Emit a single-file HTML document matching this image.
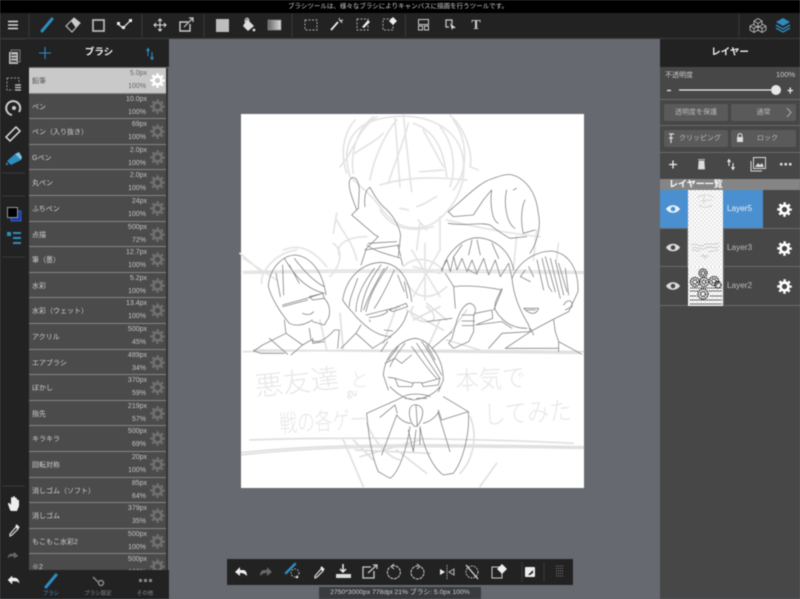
<!DOCTYPE html>
<html lang="ja">
<head>
<meta charset="utf-8">
<title>MediBang Paint</title>
<style>
html,body{margin:0;padding:0;background:#666a70}
#app{position:relative;width:800px;height:599px;overflow:hidden;background:#666a70;font-family:"Liberation Sans","Noto Sans CJK JP",sans-serif;color:#ddd;filter:blur(.4px)}
.a{position:absolute}
#top{left:-2px;top:0;width:800px;height:13px;background:#000;color:#ccc;font-size:6.500px;line-height:13px;text-align:center}
#topfill{left:0;top:0;width:800px;height:13px;background:#000}
#bar{left:0;top:13px;width:800px;height:25px;background:#222}
#line{left:0;top:38px;width:800px;height:1px;background:#3c3c3c}
#side{left:0;top:39px;width:29px;height:560px;background:#222}
#brushhead{left:29px;top:39px;width:140px;height:28px;background:#222;color:#eee;font-size:9.500px;font-weight:bold;line-height:28px;text-align:center}
#list{left:29px;top:68px;width:139px;height:502px;overflow:hidden;background:#4a4a4a}
.r{position:relative;height:25.600px;box-sizing:border-box;border-bottom:1px solid #858585;background:#4b4b4b;font-size:7px;color:#cfcfcf}
.r b{position:absolute;left:3px;top:8px;font-weight:normal}
.r i{position:absolute;right:21px;top:2px;font-style:normal;font-size:7px;color:#c4c4c4}
.r u{position:absolute;right:22px;top:15px;text-decoration:none;font-size:7px;color:#c4c4c4}
.r svg{position:absolute;left:121px;top:5px;width:15px;height:15px;fill:#6f6f6f;stroke:#6f6f6f}
.r.on{background:#c9c9c9;color:#555}
.r.on i,.r.on u{color:#666}
.r.on svg{fill:#fff;stroke:#fff}
#scroll{left:166px;top:68px;width:2px;height:502px;background:#333}
#tabs{left:29px;top:570px;width:140px;height:29px;background:#222}
.t{position:absolute;top:20px;font-size:5.500px;line-height:8px;color:#8a8a8a;width:50px;text-align:center}
#right{left:660px;top:39px;width:140px;height:560px;background:#474747}
#rhead{left:660px;top:39px;width:140px;height:28px;background:#222;color:#eee;font-size:9.500px;font-weight:bold;line-height:28px;text-align:center}
.sep{position:absolute;left:660px;width:140px;height:1px;background:#6a6a6a}
.btn{position:absolute;height:17px;background:#5a5a5a;border-radius:2px;font-size:7px;line-height:17px;text-align:center;color:#bbb}
#lab{left:660px;top:179px;width:140px;height:11px;background:#858585;color:#fff;font-size:9px;font-weight:bold;line-height:11px;text-indent:9px;overflow:hidden}
.row{position:absolute;left:660px;width:140px;height:38.500px;box-sizing:border-box;border-bottom:1px solid #6a6a6a;font-size:8.200px;color:#bbb}
.row span{position:absolute;left:67px;top:14px}
.th{position:absolute;left:688px;width:35px;height:38.500px;background:#fff;background-image:conic-gradient(#e6e6e6 25%,#fff 0 50%,#e6e6e6 0 75%,#fff 0);background-size:4px 4px}
#barb{left:227px;top:559px;width:346px;height:26px;background:#222}
#status{left:319px;top:587px;width:162px;height:12px;background:#3a3b3d;color:#ccc;font-size:6.800px;line-height:12px;text-align:center}
#canvas{left:241px;top:114px;width:343px;height:374px;background:#fff}
svg.o{position:absolute;left:0;top:0;width:800px;height:599px;pointer-events:none}
</style>
</head>
<body>
<div id="app">
<svg width="0" height="0" style="position:absolute"><defs>
<symbol id="gear" viewBox="0 0 24 24"><circle cx="12" cy="12" r="6.400" fill="none" stroke-width="4.400"/><circle cx="12" cy="12" r="9.900" fill="none" stroke-width="3.600" stroke-dasharray="3.900 3.880" stroke-dashoffset="2"/></symbol>
</defs></svg>

<div class="a" id="topfill"></div>
<div class="a" id="top">ブラシツールは、様々なブラシによりキャンバスに描画を行うツールです。</div>
<div class="a" id="bar"></div>
<div class="a" id="line"></div>
<div class="a" id="side"></div>
<div class="a" id="brushhead">ブラシ</div>

<div class="a" id="list">
<div class="r on"><b>鉛筆</b><i>5.0px</i><u>100%</u><svg><use href="#gear"/></svg></div>
<div class="r"><b>ペン</b><i>10.0px</i><u>100%</u><svg><use href="#gear"/></svg></div>
<div class="r"><b>ペン（入り抜き）</b><i>69px</i><u>100%</u><svg><use href="#gear"/></svg></div>
<div class="r"><b>Gペン</b><i>2.0px</i><u>100%</u><svg><use href="#gear"/></svg></div>
<div class="r"><b>丸ペン</b><i>2.0px</i><u>100%</u><svg><use href="#gear"/></svg></div>
<div class="r"><b>ふちペン</b><i>24px</i><u>100%</u><svg><use href="#gear"/></svg></div>
<div class="r"><b>点描</b><i>500px</i><u>72%</u><svg><use href="#gear"/></svg></div>
<div class="r"><b>筆（墨）</b><i>12.7px</i><u>100%</u><svg><use href="#gear"/></svg></div>
<div class="r"><b>水彩</b><i>5.2px</i><u>100%</u><svg><use href="#gear"/></svg></div>
<div class="r"><b>水彩（ウェット）</b><i>13.4px</i><u>100%</u><svg><use href="#gear"/></svg></div>
<div class="r"><b>アクリル</b><i>500px</i><u>45%</u><svg><use href="#gear"/></svg></div>
<div class="r"><b>エアブラシ</b><i>489px</i><u>34%</u><svg><use href="#gear"/></svg></div>
<div class="r"><b>ぼかし</b><i>370px</i><u>59%</u><svg><use href="#gear"/></svg></div>
<div class="r"><b>指先</b><i>219px</i><u>57%</u><svg><use href="#gear"/></svg></div>
<div class="r"><b>キラキラ</b><i>500px</i><u>69%</u><svg><use href="#gear"/></svg></div>
<div class="r"><b>回転対称</b><i>20px</i><u>100%</u><svg><use href="#gear"/></svg></div>
<div class="r"><b>消しゴム（ソフト）</b><i>85px</i><u>64%</u><svg><use href="#gear"/></svg></div>
<div class="r"><b>消しゴム</b><i>379px</i><u>35%</u><svg><use href="#gear"/></svg></div>
<div class="r"><b>もこもこ水彩2</b><i>500px</i><u>100%</u><svg><use href="#gear"/></svg></div>
<div class="r"><b>※2</b><i>500px</i><u>100%</u><svg><use href="#gear"/></svg></div>
</div>
<div class="a" id="scroll"></div>

<div class="a" id="tabs">
<div class="t" style="left:-3px;color:#3d8fc4">ブラシ</div>
<div class="t" style="left:44px">ブラシ設定</div>
<div class="t" style="left:91px">その他</div>
</div>

<div class="a" id="right"></div>
<div class="a" id="rhead">レイヤー</div>
<div class="a" style="left:665px;top:70px;font-size:7px;color:#ccc">不透明度</div>
<div class="a" style="left:776px;top:70px;font-size:7.500px;color:#ccc">100%</div>
<div class="sep" style="top:99px"></div>
<div class="btn" style="left:664px;top:104px;width:64px">透明度を保護</div>
<div class="btn" style="left:731px;top:104px;width:65px">通常</div>
<div class="sep" style="top:125px"></div>
<div class="btn" style="left:664px;top:130px;width:64px;text-indent:8px">クリッピング</div>
<div class="btn" style="left:731px;top:130px;width:65px;text-indent:8px">ロック</div>
<div class="sep" style="top:152px"></div>
<div class="a" id="lab">レイヤー一覧</div>

<div class="row" style="top:190px;background:linear-gradient(90deg,#4a90d0 103px,#474747 103px);color:#e8f0f8"><span>Layer5</span></div>
<div class="row" style="top:228.500px"><span>Layer3</span></div>
<div class="row" style="top:267px"><span>Layer2</span></div>
<div class="th" style="top:190px"></div>
<div class="th" style="top:228.500px"></div>
<div class="th" style="top:267px"></div>

<div class="a" id="canvas"></div>

<div class="a" id="barb"></div>
<div class="a" id="status">2750*3000px 778dpi 21% ブラシ: 5.0px 100%</div>

<svg class="o" viewBox="0 0 800 599">
<!-- toolbar separators -->
<g stroke="#3a3a3a" stroke-width="1">
<path d="M29 14V37M142 14V37M204 14V37M292 14V37M405.500 14V37M739 14V37"/>
<path d="M2 39H25M2 173H25M2 196H25M2 257H25M2 486H25M522 562V582M544 562V582"/>
</g>

<!-- SKETCH light: upper -->
<g transform="translate(240 110) scale(.3333)" fill="none" stroke="#e4e4e4" stroke-width="5" stroke-linecap="round">
<path d="M330 200C300 100 340 30 460 20C570 10 660 60 670 150C680 230 640 300 580 340C520 370 460 350 420 290C390 250 360 230 330 200"/>
<path d="M345 30C310 70 300 130 320 190M400 20C350 60 330 130 340 190M490 15L515 245M470 30C430 80 400 150 390 210M520 40C580 60 610 110 620 200M300 170C340 130 350 60 410 20M640 30C690 100 680 190 640 240M630 15C680 60 700 140 690 170L715 180M420 225C500 200 580 200 680 210M465 25L480 230M550 60L610 170M540 185L610 180M505 40C490 100 460 170 445 220M600 50C640 100 650 170 630 230M345 130C370 110 400 100 430 70"/>
<path d="M530 290C560 280 570 270 590 260M480 295L505 300M540 340L530 420M600 320L600 420M535 330L560 360M420 300C450 350 500 370 580 350"/>
<path d="M300 440C280 400 330 380 380 380M290 310L280 370M620 330C700 350 800 370 900 380M280 400C320 430 290 480 270 500M10 485C300 478 700 478 1030 485M12 490C300 484 700 486 1030 490M10 445L110 510M0 430L70 490M130 420C180 400 220 420 260 470M65 520C60 490 100 430 170 420M290 330C310 370 340 400 350 450"/>
<path d="M515 420L600 560M600 420L520 560M830 380L820 480M890 360L880 450M955 400L950 450M490 470C520 440 570 440 610 480M500 520C530 570 580 570 620 530M555 400V570M520 470L600 490"/>
</g>

<!-- SKETCH light: lower -->
<g transform="translate(240 300) scale(.3333)" fill="none" stroke="#e0e0e0" stroke-width="5" stroke-linecap="round">
<path d="M10 155C300 150 700 150 1030 155M40 150L1020 160"/>
<path d="M5 465C300 430 700 440 1030 445M5 458C300 425 700 435 1030 440M30 420C300 410 700 415 1000 430"/>
<path d="M310 420L370 560M770 490L720 560M345 450L570 460M340 420L400 480M470 450L560 520M380 370C400 420 440 470 480 480M360 470L540 420M690 350C720 420 690 490 660 520"/>
<path d="M240 60L260 150M300 40L310 150M520 20C480 70 640 90 560 20M600 60L560 150M470 20L430 130M500 30L610 90M520 60L600 20M560 10L620 60M680 30L630 100M620 120L720 150"/>
</g>
<g font-family="'Noto Sans CJK JP',sans-serif" fill="#e7e7e7" font-weight="300">
<text x="256" y="396" font-size="27" textLength="84" lengthAdjust="spacingAndGlyphs" transform="rotate(-6 256 396)">悪友達</text>
<text x="350" y="386" font-size="19">と</text>
<text x="456" y="390" font-size="26" textLength="70" lengthAdjust="spacingAndGlyphs" transform="rotate(-3 456 390)">本気で</text>
<text x="280" y="432" font-size="24" textLength="88" lengthAdjust="spacingAndGlyphs" transform="rotate(-3 280 432)">戦の各ゲー</text>
<text x="484" y="424" font-size="26" textLength="88" lengthAdjust="spacingAndGlyphs" transform="rotate(-3 484 424)">してみた</text>
<text x="347" y="396" font-size="9" fill="#ccc">gu</text>
</g>

<!-- SKETCH dark: hands at top -->
<g transform="translate(240 110) scale(.3333)" fill="none" stroke="#858585" stroke-width="2.400" stroke-linecap="round" stroke-linejoin="round">
<path d="M350 300C340 270 325 240 328 215C335 190 358 205 358 240L355 295"/>
<path d="M375 290C372 265 375 240 390 232C400 250 410 270 430 290C455 310 475 340 482 375L475 440"/>
<path d="M355 295L335 315L405 375L415 380L375 420L480 405"/>
<path d="M385 400L470 395"/>
<path d="M625 305C680 260 720 215 760 205C790 195 810 185 840 205C870 225 890 260 895 310C905 350 890 400 870 430"/>
<path d="M625 340C680 350 720 335 750 345C770 360 790 375 810 385L860 380"/>
<path d="M625 305L640 320L700 315L730 270L755 240M755 240C750 280 755 330 775 340M800 240C790 280 800 340 825 355M855 270C840 300 845 350 850 370L885 360M820 240L830 235"/>
</g>

<!-- SKETCH dark: left two heads -->
<g transform="translate(241 245) scale(.3333)" fill="none" stroke="#858585" stroke-width="2.400" stroke-linecap="round" stroke-linejoin="round">
<path d="M82 125C85 70 125 30 165 30C205 35 245 75 255 150"/>
<path d="M82 125C95 170 120 205 145 235C165 245 190 240 215 225"/>
<path d="M130 40C160 90 190 130 250 145M125 60L128 150M105 85L118 155M160 40C190 80 220 110 250 125M145 60L175 115"/>
<path d="M125 180C160 170 200 160 245 145M205 155L245 145L250 160L215 165ZM125 185L200 165"/>
<path d="M185 205C200 212 212 208 218 200"/>
<path d="M130 225L135 265L65 300L38 318L60 325L130 325M135 265L185 300L150 330M85 280L140 328M205 250L210 285L185 300"/>
<path d="M250 160C265 175 270 200 262 220L250 240L215 230M210 285C225 295 250 290 280 255L295 255L290 310M215 280L215 295L250 290"/>
<path d="M305 165C315 100 360 55 420 52C470 55 505 95 512 170"/>
<path d="M305 165C320 190 340 205 345 215M420 60C390 100 365 150 360 200M440 65C410 110 385 150 375 200M400 70C370 110 345 150 345 200M460 75C440 120 420 160 400 190M350 100C340 130 325 160 325 185M470 90L490 140M490 110L500 160M430 70C400 120 380 160 368 195"/>
<path d="M375 210L435 195L475 185M385 218C410 215 430 210 440 200L435 195M445 195L495 175L500 185L455 200Z"/>
<path d="M345 215C370 240 400 270 445 275C470 260 490 235 500 200"/>
<path d="M430 255L455 258M385 225L388 230"/>
<path d="M360 240L345 265L300 310M345 265L395 310L450 275M440 290L420 320"/>
<path d="M375 15L360 60M378 0C400 20 450 30 480 40L485 60M470 0L480 35"/>
</g>

<!-- SKETCH dark: right two heads -->
<g transform="translate(412 235) scale(.3333)" fill="none" stroke="#858585" stroke-width="2.400" stroke-linecap="round" stroke-linejoin="round">
<path d="M90 110C100 55 150 10 195 8C250 10 295 50 305 105"/>
<path d="M88 105L105 75L115 110L125 65L135 105L150 70L165 110L180 75L195 115L215 70L230 120L250 75L265 125L290 85L300 130"/>
<path d="M180 15L170 60M195 15L205 60M150 30L125 65M240 25L260 70M170 105L195 118"/>
<path d="M100 115L125 155L130 220M125 155C170 150 220 155 270 165L245 225"/>
<path d="M120 310L135 255C145 225 160 205 175 205C190 210 195 225 185 240L185 290L170 320L125 340L110 325ZM150 240H188M150 258H188M150 272H185"/>
<path d="M190 235L240 225L242 250L195 268"/>
<path d="M45 260L120 250M120 290L60 340M190 270L270 260L300 280M230 340L270 295L355 290M280 340L355 290"/>
<path d="M300 130C320 80 370 48 420 48C470 55 500 100 498 170L470 230L420 255"/>
<path d="M300 130C305 180 320 220 350 270L355 290L420 255"/>
<path d="M375 75L395 165M390 70L410 155L420 170M350 95L365 125M400 65L430 170M415 70L445 190M440 85L465 170M460 100L470 180M340 105L325 125L355 140M430 75L455 180"/>
<path d="M455 210C465 190 485 195 480 215L460 225"/>
<path d="M335 220C350 235 370 245 380 220ZM345 225L370 225"/>
<path d="M355 280L365 300M425 255L430 290L440 320L510 358M440 320L440 350M280 340L440 340"/>
<path d="M250 225C270 260 300 280 345 280M270 160C255 190 245 205 250 225"/>
</g>

<!-- SKETCH dark: center figure -->
<g transform="translate(340 330) scale(.3333)" fill="none" stroke="#858585" stroke-width="2.400" stroke-linecap="round" stroke-linejoin="round">
<path d="M130 135C135 75 180 30 225 25C270 30 310 85 310 150"/>
<path d="M135 100L165 85L185 100L215 75M215 50C235 75 260 115 290 145M230 40C250 70 275 110 300 145M245 35C265 60 290 110 305 135M260 45L285 90M195 40C180 60 160 85 150 110M175 50L145 90M130 135L145 180M310 150L295 185"/>
<path d="M165 145L220 160L215 170L175 170ZM245 160L300 145L295 165L250 170ZM220 158H245M145 142L165 145"/>
<path d="M150 170C170 190 190 205 220 210C260 205 285 190 300 170"/>
<path d="M190 200C205 190 250 190 270 200M195 205L215 207M230 205L260 205"/>
<path d="M210 235C215 220 240 220 248 240C250 265 235 290 225 290C210 280 205 250 210 235M228 225L232 290M170 255C180 270 200 280 212 280M250 280C270 275 290 260 295 245"/>
<path d="M80 250L170 210L190 200M120 262L165 225L172 250M310 200L385 245L305 270L295 240"/>
<path d="M80 250C85 310 95 380 115 425L150 445C175 430 200 360 210 290M385 245C390 310 370 390 340 430L310 435C275 410 250 350 240 290M170 255L125 375M295 250L330 365M205 300L220 365L228 300M240 290V345"/>
</g>

<!-- top toolbar icons -->
<g fill="none" stroke="#ddd">
<path d="M8 21.500H18M8 25H18M8 28.500H18" stroke-width="1.500"/>
<path d="M42 31L52 19" stroke="#2e8cc0" stroke-width="3" stroke-linecap="round"/>
<path d="M66 26L74 18L80 23L72 32Z" stroke="#bbb" stroke-width="1.200"/><path d="M71 21L74 18L80 23L76 28Z" fill="#ccc" stroke="none"/>
<rect x="93" y="20" width="11" height="11" stroke="#bbb" stroke-width="1.700"/>
<path d="M118 24L123 28L131 20" stroke="#ddd" stroke-width="1.300"/><path d="M117 22h3v3h-3zM122 26h3v3h-3zM129 19h3v3h-3z" fill="#eee" stroke="none"/>
<path d="M160 19V31M154 25H166M158 21L160 19L162 21M158 29L160 31L162 29M156 23L154 25L156 27M164 23L166 25L164 27" stroke="#ddd" stroke-width="1"/>
<path d="M188 22H180V31H190V24" stroke="#ccc" stroke-width="1.400"/><path d="M184 27L193 18M189 18H193V22" stroke="#ccc" stroke-width="1.200"/>
<rect x="216" y="19" width="13" height="13" fill="#bdbdbd" stroke="none"/>
<path d="M247 19L254 26L248 31L243 26Z" fill="#ddd" stroke="none"/><path d="M245 22C245 17 249 17 249 21" stroke="#ddd"/><circle cx="254" cy="30" r="1.400" fill="#ddd" stroke="none"/>
<rect x="268" y="20" width="13" height="10" fill="url(#gr)" stroke="#888" stroke-width=".7"/>
<g stroke="#aaa" stroke-dasharray="2 1.500" stroke-width="1"><rect x="305" y="20" width="12" height="10"/><rect x="357" y="19" width="11" height="11"/><rect x="383" y="19" width="10" height="11"/></g>
<path d="M331 30L338 22" stroke="#eee" stroke-width="1.800"/><path d="M339 18L340 21L343 20M342 23L341 21" stroke="#ddd"/>
<path d="M362 27L368 20L370 22L364 28Z" fill="#eee" stroke="none"/>
<path d="M389 21L393 17L397 21L393 25Z" fill="#eee" stroke="none"/>
<rect x="418.500" y="19.500" width="10" height="5" stroke="#ccc"/><rect x="418.500" y="26" width="4" height="4" stroke="#ccc"/><rect x="424.500" y="26" width="4" height="4" stroke="#ccc"/>
<path d="M452 24V20H446V27H449" stroke="#ccc" stroke-width="1.200"/><path d="M450 23L456 28L453 28L452 30Z" fill="#ddd" stroke="none"/>
<g stroke="#bbb" stroke-width=".9"><path d="M754 21L758 18.500L762 21L758 23.500ZM754 21V25L758 27.500L762 25V21M758 23.500V27.500"/><path d="M750 26L754 24M750 26L754 28.500L758 26M750 26V30L754 32.500L758 30V26M754 28.500V32.500M766 26L762 24M766 26L762 28.500L758 26M766 26V30L762 32.500L758 30M762 28.500V32.500"/></g>
<path d="M783 18L790 22L783 26L776 22Z" fill="#2e8cc0" stroke="none"/><path d="M776 25L783 29L790 25M776 28L783 32L790 28" stroke="#2e8cc0" stroke-width="1.300"/>
</g>
<defs><linearGradient id="gr"><stop offset="0" stop-color="#666"/><stop offset="1" stop-color="#ddd"/></linearGradient></defs>
<text x="476" y="29" text-anchor="middle" font-family="'Liberation Serif',serif" font-size="14" font-weight="bold" fill="#ccc">T</text>

<!-- brush header icons -->
<g fill="none">
<path d="M45 47V59M39 53H51" stroke="#2e8cc0" stroke-width="1.100"/>
<path d="M148 49V56M146.500 51L148 48.500L149.500 51M152 52V59M150.500 57L152 59.500L153.500 57" stroke="#2e8cc0" stroke-width="1.100"/>
</g>

<!-- left sidebar icons -->
<g fill="none" stroke="#bbb">
<rect x="9" y="52" width="9" height="12" fill="#bbb" stroke="none"/><rect x="11" y="50" width="9" height="12" stroke="#777"/><path d="M10.500 55H16.500M10.500 58H16.500M10.500 61H16.500" stroke="#333"/>
<path d="M7 78H19V84M7 78V90H13" stroke="#999" stroke-dasharray="2 1.500"/><path d="M15 85H21M15 87.500H21M15 90H21" stroke="#ccc" stroke-width="1.200"/>
<path d="M19 112A7 7 0 1 0 12 115M7 112" stroke="#ccc" stroke-width="2"/><circle cx="14" cy="108" r="2" fill="#ccc" stroke="none"/>
<path d="M7 138L17 128L21 132L11 142Z" stroke="#ddd" stroke-width="1.500" transform="translate(-1 -1)"/>
<path d="M7 161L15 154L21 160L11 165Z" fill="#2e8cc0" stroke="none"/><path d="M15 154L19 152L22 157L21 160Z" fill="#7fc3e6" stroke="none"/><path d="M6 163h2v2h-2z" fill="#2e8cc0" stroke="none"/>
<rect x="11" y="211" width="10" height="10" fill="#1b3f9c" stroke="#2c5fd0"/><rect x="7.500" y="207.500" width="10" height="10" fill="#000" stroke="#999"/>
<path d="M7 232h4v4h-4zM13 232h8v2h-8zM13 237h8v2h-8zM13 242h8v2h-8z" fill="#2e8cc0" stroke="none"/>
<path d="M10 510L8 504C8 502 10 503 11 505V498C11 497 13 497 13 498V497C13 496 15 496 15 497V498C16 497 17 498 17 499V500C18 499 19 500 19 501V506L17 511H11Z" fill="#eee" stroke="none"/>
<path d="M10 534L16 527L18 529L12 535L10 536Z" stroke="#ddd" stroke-width="1.200"/><path d="M16 525L19 528" stroke="#eee" stroke-width="2"/>
<path d="M18 556L14 552V554H11C9 554 8 556 8 558C9 556 11 556 14 556V558Z" fill="#666" stroke="#666" stroke-width=".5"/>
<path d="M8 580L12 576V578H15C17 578 19 580 19 583C18 581 16 581 12 581V584Z" fill="#eee" stroke="#eee" stroke-width=".5"/>
</g>

<!-- bottom tabs icons -->
<g fill="none">
<path d="M46 587L56 575" stroke="#2e8cc0" stroke-width="3" stroke-linecap="round"/>
<path d="M93 577L98 582" stroke="#888" stroke-width="1.500"/><circle cx="101" cy="583" r="2.500" stroke="#888" stroke-width="1.500"/>
<path d="M139 579h3v3h-3zM144 579h3v3h-3zM149 579h3v3h-3z" fill="#888"/>
</g>

<!-- right panel -->
<g fill="none">
<path d="M667 90.500H671" stroke="#eee" stroke-width="1.300"/>
<path d="M679 90H771" stroke="#eee" stroke-width="1.300"/>
<circle cx="776" cy="90" r="5" fill="#e8e8e8"/>
<path d="M787.500 90.500H793M790.200 87.500V93.500" stroke="#eee" stroke-width="1.300"/>
<path d="M787 108L791 112.500L787 117" stroke="#aaa"/>
<path d="M669 134H674M671 134V143M669 138H673" stroke="#ddd" stroke-width="1.200"/>
<rect x="737" y="137" width="6" height="5" fill="#ddd"/><path d="M738 137V135.500C738 133 742 133 742 135.500V137" stroke="#ddd"/>
<path d="M669 164.500H677M673 160.500V168.500" stroke="#eee" stroke-width="1.300"/>
<path d="M698 159.500h7M699 161h5l.5 8h-6z" fill="#ddd" stroke="#ddd" stroke-width=".8"/>
<path d="M729 160V166M727.500 162L729 159.500L730.500 162M733 163V169M731.500 167L733 169.500L734.500 167" stroke="#eee"/>
<rect x="753.500" y="157.500" width="12" height="11" stroke="#ddd"/><path d="M751 161V171H762" stroke="#ddd"/><path d="M755 167L758 163L760 165L762 163L764 167Z" fill="#ddd"/>
<path d="M780 163h2.500v2.500h-2.500zM784.500 163h2.500v2.500h-2.500zM789 163h2.500v2.500H789z" fill="#ddd"/>
</g>
<g>
<path d="M666 209C669 204 677 204 680 209C677 214 669 214 666 209Z" fill="#e8f2fb"/><circle cx="673" cy="209" r="2.300" fill="#4a90d0"/>
<path d="M666 247.500C669 242.500 677 242.500 680 247.500C677 252.500 669 252.500 666 247.500Z" fill="#ddd"/><circle cx="673" cy="247.500" r="2.300" fill="#474747"/>
<path d="M666 286C669 281 677 281 680 286C677 291 669 291 666 286Z" fill="#ddd"/><circle cx="673" cy="286" r="2.300" fill="#474747"/>
<use href="#gear" x="777" y="202" width="15" height="15" fill="#fff" stroke="#fff"/>
<use href="#gear" x="777" y="241" width="15" height="15" fill="#fff" stroke="#fff"/>
<use href="#gear" x="777" y="279" width="15" height="15" fill="#fff" stroke="#fff"/>
<path d="M687.500 229V267M723.500 229V306" stroke="#666" stroke-width="1"/>
</g>
<!-- layer thumbnails -->
<g fill="none" stroke="#c4c4c4" stroke-width=".8">
<path d="M697 198C701 194 710 194 714 198M700 201L712 200M699 205C703 208 708 208 712 205M704 195V204" stroke="#d0d0d0"/>
<path d="M691 245C695 242 700 248 704 245C708 242 714 246 719 243M692 248C696 246 702 251 706 248C710 245 715 250 720 246M692 250L700 251M708 252L718 250M703 254L706 259M700 256L709 256"/>
</g>
<g fill="none" stroke="#1c1c1c" stroke-width="1.500" stroke-dasharray="1.300 .8">
<circle cx="703" cy="273" r="4"/>
<circle cx="703" cy="273" r="2"/>
<circle cx="695" cy="282" r="4.500"/><circle cx="695" cy="282" r="2.200"/>
<circle cx="704" cy="282" r="4.500"/><circle cx="704" cy="282" r="2"/>
<circle cx="714" cy="281" r="4.500"/><circle cx="714" cy="281" r="2.200"/>
<circle cx="718" cy="285" r="3"/>
<circle cx="703" cy="294" r="5"/><circle cx="703" cy="294" r="2.500"/>
<path d="M690 288H722M690 291H698M709 291H722M690 296H697M710 296H722M690 300H722M690 304H722" stroke-width="1"/>
</g>

<!-- bottom toolbar icons -->
<g fill="none" stroke="#ddd">
<path d="M235 572L240 567V570H243C246 570 247 573 247 576C245 574 243 573 240 573V576Z" fill="#eee" stroke="none"/>
<path d="M272 572L267 567V570H264C261 570 260 573 260 576C262 574 264 573 267 573V576Z" fill="#666" stroke="none"/>
<path d="M286 573L295 564" stroke="#2e8cc0" stroke-width="2.500" stroke-linecap="round"/><circle cx="295" cy="573" r="4" stroke="#bbb" stroke-dasharray="1.500 1.500"/><circle cx="297" cy="577" r="1.300" fill="#ddd" stroke="none"/>
<path d="M315 576L321 569L323 571L317 577L315 578Z" stroke-width="1.200"/><path d="M321 567L324 570" stroke="#eee" stroke-width="2"/>
<path d="M343 564V571M340 569L343 572L346 569" stroke="#eee" stroke-width="1.500"/><path d="M336 574H351V578H336Z" fill="#ddd" stroke="none"/>
<path d="M371 567H363V578H374V571" stroke="#ccc" stroke-width="1.300"/><path d="M368 573L377 565M373 565H377V569" stroke="#ccc" stroke-width="1.200"/>
<path d="M392 566A6.500 6.500 0 1 1 390 567" stroke="#ccc" stroke-dasharray="3 .8" stroke-width="1"/><path d="M394 564L391 566.500L394 569" stroke="#ccc"/>
<path d="M418 566A6.500 6.500 0 1 0 421 567" stroke="#ccc" stroke-dasharray="3 .8"/><path d="M417 564L420 566.500L417 569" stroke="#ccc"/>
<path d="M440 569L445 572L440 575Z" fill="#eee" stroke="none"/><path d="M447 565V579" stroke="#aaa" stroke-dasharray="1.500 1"/><path d="M454 569L449 572L454 575Z" stroke="#bbb"/>
<circle cx="472" cy="572" r="6" stroke="#bbb" stroke-dasharray="2 1"/><path d="M466 565L478 579" stroke="#ddd" stroke-width="1.300"/>
<path d="M505 567H492V578H502V572" stroke="#ccc"/><path d="M497 569L502 564L507 569L502 574Z" fill="#eee" stroke="none"/>
<rect x="525" y="567" width="10" height="10" rx="1" fill="#eee" stroke="none"/><path d="M528 575L533 570L533 573L530 575Z" fill="#222" stroke="none"/>
<path d="M556 566H564M556 568.500H564M556 571H564M556 573.500H564M556 576H564" stroke="#777" stroke-dasharray="1 1"/>
</g>
</svg>
</div>
</body>
</html>
